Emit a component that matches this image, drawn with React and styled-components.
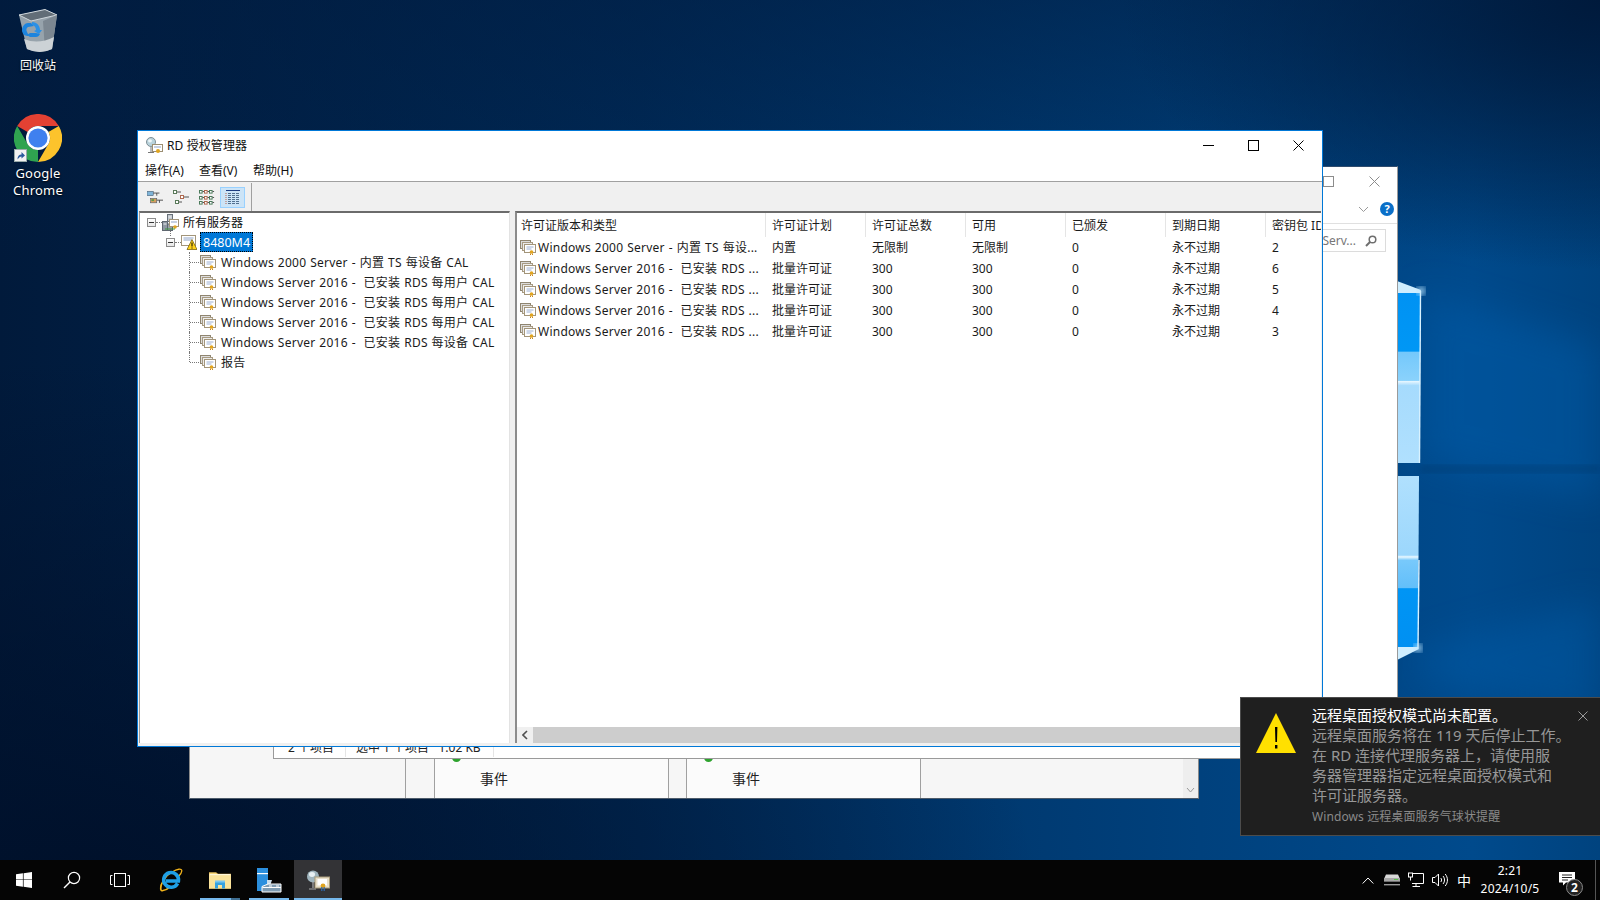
import React from 'react';
import styled, { createGlobalStyle } from 'styled-components';

const licenses = [
  { name: 'Windows 2000 Server - 内置 TS 每设...', plan: '内置', total: '无限制', free: '无限制', id: 2 },
  { name: 'Windows Server 2016 -  已安装 RDS ...', plan: '批量许可证', total: '300', free: '300', id: 6 },
  { name: 'Windows Server 2016 -  已安装 RDS ...', plan: '批量许可证', total: '300', free: '300', id: 5 },
  { name: 'Windows Server 2016 -  已安装 RDS ...', plan: '批量许可证', total: '300', free: '300', id: 4 },
  { name: 'Windows Server 2016 -  已安装 RDS ...', plan: '批量许可证', total: '300', free: '300', id: 3 },
];

const treeLeaves = [
  'Windows 2000 Server - 内置 TS 每设备 CAL',
  'Windows Server 2016 -  已安装 RDS 每用户 CAL',
  'Windows Server 2016 -  已安装 RDS 每用户 CAL',
  'Windows Server 2016 -  已安装 RDS 每用户 CAL',
  'Windows Server 2016 -  已安装 RDS 每设备 CAL',
  '报告',
];

const columns = ['许可证版本和类型', '许可证计划', '许可证总数', '可用', '已颁发', '到期日期', '密钥包 ID'];

function CertStack() {
  return (
    <svg width="16" height="16" viewBox="0 0 16 16">
      <rect x="0.5" y="1.5" width="10" height="8" fill="#dcdcdc" stroke="#8f8570" />
      <rect x="2.5" y="3.5" width="10" height="8" fill="#ececec" stroke="#a89b82" />
      <rect x="4.5" y="5.5" width="11" height="8" fill="#fff" stroke="#a3957a" />
      <path d="M6.5 8h7M6.5 10h5" stroke="#9db0d2" />
      <circle cx="11.5" cy="13" r="1.8" fill="#e0a41f" />
      <path d="M10.5 14.5v1.5M12.5 14.5v1.5" stroke="#c9871a" />
    </svg>
  );
}

function ServersIcon() {
  return (
    <svg width="17" height="17" viewBox="0 0 17 17">
      <rect x="0.5" y="7.5" width="5" height="9" fill="#8f98a3" stroke="#5f6770" />
      <rect x="5.5" y="0.5" width="5" height="7" fill="#c0c6cc" stroke="#69717a" />
      <rect x="5.5" y="10" width="5" height="6.5" fill="#9aa3ac" stroke="#5f6770" />
      <path d="M1.5 10h3M6.5 3h3" stroke="#eee" />
      <rect x="7.5" y="5.5" width="9" height="7" fill="#fff" stroke="#a3957a" />
      <path d="M9 8h6" stroke="#8fa3c7" />
      <circle cx="13" cy="13" r="1.8" fill="#e0a41f" />
      <path d="M3 15h10" stroke="#3e9a3e" />
    </svg>
  );
}

function LicenseServerIcon() {
  return (
    <svg width="16" height="16" viewBox="0 0 16 16">
      <rect x="0.5" y="1.5" width="14" height="10" fill="#fff" stroke="#a3957a" />
      <path d="M2.5 4h10M2.5 6h8" stroke="#8fa3c7" />
      <path d="M11 5.5 L16 15.5 H6 Z" fill="#ffd21a" stroke="#6b5500" strokeWidth="0.7" />
      <path d="M11 8.5v4M11 13.5v1" stroke="#000" />
    </svg>
  );
}

function ToolGlyph({ kind }) {
  if (kind === 0) {
    return (
      <svg width="16" height="15" viewBox="0 0 18 16">
        <rect x="0" y="1" width="7" height="5" fill="#7fb4d8" stroke="#456" strokeWidth="0.6" />
        <path d="M7 3h7M11 3v3" stroke="#444" />
        <rect x="4" y="9" width="7" height="5" fill="#d8a060" stroke="#456" strokeWidth="0.6" />
        <rect x="5" y="10" width="3" height="2" fill="#5a9a4a" />
        <path d="M11 11h7M14 11v3" stroke="#444" />
      </svg>
    );
  }
  if (kind === 1) {
    return (
      <svg width="18" height="16" viewBox="0 0 18 16">
        <rect x="1.5" y="1.5" width="3" height="3" fill="#fff" stroke="#5a7a5a" />
        <path d="M5 3h4" stroke="#555" />
        <rect x="8.5" y="6.5" width="3" height="3" fill="#fff" stroke="#b06a50" />
        <path d="M12 8h5" stroke="#555" />
        <rect x="3.5" y="11.5" width="3" height="3" fill="#fff" stroke="#5a7a5a" />
        <path d="M7 13h3" stroke="#555" />
      </svg>
    );
  }
  if (kind === 2) {
    return (
      <svg width="16" height="16" viewBox="0 0 16 16">
        {[1.5, 7.5, 12.5].map(y =>
          [0.5, 5.5, 10.5].map((x, i) => (
            <g key={`${x}-${y}`}>
              <rect x={x} y={y} width="2.6" height="2.6" fill="#fff" stroke={i === 1 ? '#b06a50' : '#4a7a5a'} />
              <path d={`M${x + 3} ${y + 1}h1.6`} stroke="#555" />
            </g>
          )),
        )}
      </svg>
    );
  }
  return (
    <svg width="16" height="16" viewBox="0 0 16 16">
      <path d="M1 1.5h14" stroke="#1c3c80" />
      {[4.5, 6.5, 8.5, 10.5, 12.5, 14.5].map(y => (
        <path key={y} d={`M3 ${y}h12`} stroke="#52708f" strokeDasharray="3 1" />
      ))}
      <path d="M1 4v11" stroke="#b9634a" strokeDasharray="1 1" />
    </svg>
  );
}

function RecycleBin() {
  return (
    <svg width="40" height="44" viewBox="0 0 40 44">
      <path d="M1 6 L27 0.5 L39 6 L34 40 Q22 46 9 40 Z" fill="#97a3ac" />
      <path d="M1 6 L27 0.5 L39 6 L13 12 Z" fill="#626d77" stroke="#cfd6db" strokeWidth="1" />
      <path d="M25 12 L39 6 L34 40 L27 42 Z" fill="#7c8791" />
      <path d="M6 30 Q20 36 36 28 L34 40 Q22 46 9 40 Z" fill="#ccd2d6" />
      <path d="M4 22 C4 17 7 14 10 14 L13 14 L16 17 L10 18 C8 19 8 21 9 23 L11 27 C7 27 5 26 4 22 Z" fill="#1c84de" />
      <path d="M14 13 C19 13 22 17 22 21 L24 21 L21 25 L16 22 L18 21 C18 18 16 16 14 16 Z" fill="#2b90e6" />
      <path d="M12 28 L18 28 C20 28 21 27 22 25 L18 24 L12 24 L9 26 Z" fill="#1c84de" />
    </svg>
  );
}

function ChromeIcon() {
  return (
    <svg width="48" height="48" viewBox="0 0 48 48">
      <path d="M3.2 12 A24 24 0 0 1 44.8 12 L24 12 A12 12 0 0 0 13.6 18 Z" fill="#e34133" />
      <path d="M44.8 12 A24 24 0 0 1 24 48 L34.4 30 A12 12 0 0 0 34.4 18 Z" fill="#fcc32c" />
      <path d="M24 48 A24 24 0 0 1 3.2 12 L13.6 30 A12 12 0 0 0 24 36 Z" fill="#2fa350" />
      <circle cx="24" cy="24" r="12" fill="#fff" />
      <circle cx="24" cy="24" r="9.6" fill="#3f80ef" />
    </svg>
  );
}

function ShortcutArrow() {
  return (
    <svg width="13" height="13" viewBox="0 0 13 13">
      <rect x="0.5" y="0.5" width="12" height="12" fill="#f2f2f2" stroke="#9aa" />
      <path d="M3.5 10.5 C3.5 7 5 5.5 7.5 5.5 V3 L11 6.5 L7.5 9.5 V7.5 C6 7.5 5 8.5 3.5 10.5 Z" fill="#2a5a9c" />
    </svg>
  );
}

function RdTitleIcon({ size = 17 }) {
  return (
    <svg width={size} height={size} viewBox="0 0 17 17">
      <circle cx="5" cy="5" r="4.5" fill="#b9d3dc" stroke="#7f8f96" />
      <ellipse cx="4" cy="3.8" rx="2" ry="1.6" fill="#eef6f8" />
      <path d="M5 10v5M2 15.5h6" stroke="#777" />
      <rect x="6.5" y="7.5" width="10" height="7" fill="#fff" stroke="#9c8e72" />
      <path d="M8 10h7" stroke="#8fa3c7" />
      <circle cx="12" cy="14" r="2" fill="#e0a41f" />
    </svg>
  );
}

function StartGlyph() {
  return (
    <svg width="16" height="16" viewBox="0 0 16 16">
      <path d="M0 2.3 L6.9 1.3 V7.4 H0 Z M7.6 1.2 L16 0 V7.4 H7.6 Z M0 8.1 H6.9 V14.7 L0 13.7 Z M7.6 8.1 H16 V16 L7.6 14.8 Z" fill="#fff" />
    </svg>
  );
}

function SearchGlyph() {
  return (
    <svg width="18" height="18" viewBox="0 0 18 18" fill="none" stroke="#fff" strokeWidth="1.2">
      <circle cx="11" cy="7" r="5.6" />
      <path d="M7 11 L1 17" strokeWidth="1.5" />
    </svg>
  );
}

function TaskViewGlyph() {
  return (
    <svg width="20" height="14" viewBox="0 0 20 14" fill="none" stroke="#fff" strokeWidth="1">
      <rect x="4.5" y="0.5" width="11" height="13" />
      <path d="M2.5 2.5H0.5V11.5H2.5M17.5 2.5H19.5V11.5H17.5" />
    </svg>
  );
}

function IeGlyph() {
  return (
    <svg width="24" height="24" viewBox="0 0 24 24" fill="none">
      <path d="M2 21.5 C0 18 6 8 13 4 C18 1 23 0 22.8 3 C22.6 5 21 7 19.5 8.5" stroke="#f2b41b" strokeWidth="1.3" />
      <path d="M3 15 C1 20 1 23 4 22.6 C6 22.4 8.5 21 10 19.6" stroke="#f2b41b" strokeWidth="1.5" />
      <path d="M18.6 15.4 A7.4 7.4 0 1 1 19.4 13 H7" stroke="#1fa0e6" strokeWidth="3.6" />
    </svg>
  );
}

function FolderGlyph() {
  return (
    <svg width="22" height="18" viewBox="0 0 22 18">
      <path d="M0 1.5 H7 L9 3 H22 V17.5 H0 Z" fill="#f8d77a" stroke="#e0b550" strokeWidth="0.5" />
      <rect x="0" y="4" width="22" height="13.5" fill="#fbe39a" />
      <rect x="0.5" y="3" width="21" height="1.2" fill="#fff6d8" />
      <path d="M6 11 H16 V17.5 H13 V14 H9 V17.5 H6 Z" fill="#37a2e0" />
      <rect x="6" y="9.5" width="10" height="2" fill="#7cc6ee" />
    </svg>
  );
}

function ServerManagerGlyph() {
  return (
    <svg width="26" height="26" viewBox="0 0 26 26">
      <rect x="1" y="1" width="11" height="23" fill="#2b8fde" />
      <rect x="1" y="6" width="11" height="1.2" fill="#fff" />
      <path d="M11 13 H16 L14 19 H11 Z" fill="#c9ddec" />
      <path d="M12 17 H25 V25 H6 V19.5 Z" fill="#7f9db4" stroke="#fff" strokeWidth="1" />
      <path d="M6.5 20.5 H25 M13 19 h3 M20 19 h3" stroke="#fff" strokeWidth="1" />
    </svg>
  );
}

function RdTaskGlyph() {
  return (
    <svg width="24" height="22" viewBox="0 0 24 22">
      <circle cx="7" cy="7.5" r="6" fill="#9fb4bd" />
      <ellipse cx="6" cy="5.5" rx="3" ry="2.4" fill="#e8f0f3" />
      <path d="M7 13v6M3 20h7" stroke="#aaa" strokeWidth="1.2" />
      <rect x="9" y="8" width="14.5" height="11" fill="#e8dfc9" stroke="#a89a78" />
      <rect x="11.5" y="10" width="9.5" height="6.5" fill="#fff" />
      <circle cx="17" cy="17" r="2.4" fill="#e0a41f" />
      <path d="M15.8 18v4M18.2 18v4" stroke="#2d6ab4" strokeWidth="1.2" />
    </svg>
  );
}

function Wallpaper() {
  return (
    <WallpaperSvg viewBox="0 0 1600 900" preserveAspectRatio="none">
      <defs>
        <linearGradient id="sky" x1="0" y1="0" x2="1" y2="0">
          <stop offset="0" stopColor="#011a3b" />
          <stop offset="0.4" stopColor="#002b59" />
          <stop offset="0.75" stopColor="#00417d" />
          <stop offset="0.92" stopColor="#004a8c" />
          <stop offset="1" stopColor="#00437f" />
        </linearGradient>
        <linearGradient id="topShade" x1="0" y1="0" x2="0" y2="1">
          <stop offset="0" stopColor="#011c40" stopOpacity="0.55" />
          <stop offset="0.3" stopColor="#011c40" stopOpacity="0" />
        </linearGradient>
        <radialGradient id="lowerLeft" cx="0.05" cy="1" r="0.6">
          <stop offset="0" stopColor="#00102a" />
          <stop offset="1" stopColor="#00102a" stopOpacity="0" />
        </radialGradient>
        <radialGradient id="cornerDark" cx="1" cy="0" r="0.3">
          <stop offset="0" stopColor="#001a3c" />
          <stop offset="1" stopColor="#001a3c" stopOpacity="0" />
        </radialGradient>
        <linearGradient id="paneTop" x1="0" y1="291" x2="0" y2="463" gradientUnits="userSpaceOnUse">
          <stop offset="0" stopColor="#0092f3" />
          <stop offset="0.35" stopColor="#0097f5" />
          <stop offset="0.355" stopColor="#74c8fb" />
          <stop offset="0.52" stopColor="#8ad2fc" />
          <stop offset="0.525" stopColor="#e6f6ff" />
          <stop offset="0.55" stopColor="#a6dbfd" />
          <stop offset="1" stopColor="#b0e0fe" />
        </linearGradient>
        <linearGradient id="paneBottom" x1="0" y1="476" x2="0" y2="648" gradientUnits="userSpaceOnUse">
          <stop offset="0" stopColor="#b0e0fe" />
          <stop offset="0.46" stopColor="#9cd7fc" />
          <stop offset="0.47" stopColor="#eaf8ff" />
          <stop offset="0.49" stopColor="#78c9fb" />
          <stop offset="0.65" stopColor="#62bffa" />
          <stop offset="0.655" stopColor="#0095f5" />
          <stop offset="1" stopColor="#0090f2" />
        </linearGradient>
        <filter id="soft"><feGaussianBlur stdDeviation="18" /></filter>
        <filter id="flare"><feGaussianBlur stdDeviation="3" /></filter>
      </defs>
      <rect width="1600" height="900" fill="url(#sky)" />
      <rect width="1600" height="900" fill="url(#topShade)" />
      <rect width="1600" height="900" fill="url(#lowerLeft)" />
      <rect width="1600" height="900" fill="url(#cornerDark)" />
      <g filter="url(#soft)" opacity="0.4">
        <path d="M1420 291 L1600 345 V500 L1420 460 Z" fill="#0060b0" />
        <path d="M1420 648 L1600 600 V720 L1420 680 Z" fill="#005ead" />
      </g>
      <rect x="1420" y="465" width="180" height="8" fill="#00305f" opacity="0.3" filter="url(#flare)" />
      <path d="M1300 293 H1420 V463 H1300 Z" fill="url(#paneTop)" />
      <path d="M1300 476 H1419 L1418 648 H1300 Z" fill="url(#paneBottom)" />
      <path d="M1397 281 L1421 290 L1420 293 H1397 Z" fill="#cfeeff" />
      <path d="M1397 647 H1418 L1419 649 L1397 660 Z" fill="#cfeeff" />
      <path d="M1420.5 291 L1419.5 463" fill="none" stroke="#d9f2ff" strokeWidth="1.4" />
      <path d="M1418 648 L1419 560" fill="none" stroke="#d9f2ff" strokeWidth="1.4" />
      <circle cx="1421" cy="291" r="4" fill="#bfe8ff" filter="url(#flare)" />
      <circle cx="1418" cy="648" r="4" fill="#bfe8ff" filter="url(#flare)" />
    </WallpaperSvg>
  );
}

function App() {
  return (
    <Desktop>
      <GlobalStyle />
      <Wallpaper />

      <DesktopIcon $top={9}>
        <RecycleBin />
        <IconLabel $cjk>回收站</IconLabel>
      </DesktopIcon>
      <DesktopIcon $top={114}>
        <ChromeIcon />
        <ShortcutBadge><ShortcutArrow /></ShortcutBadge>
        <IconLabel>Google<br />Chrome</IconLabel>
      </DesktopIcon>

      <BackPanel>
        <BackSpacer />
        <EventGutter />
        <EventCard>
          <GreenDot />
          <EventLabel>事件</EventLabel>
        </EventCard>
        <EventGutter $narrow />
        <EventCard>
          <GreenDot />
          <EventLabel>事件</EventLabel>
        </EventCard>
        <PanelFill />
        <PanelScroll>
          <svg width="9" height="6" viewBox="0 0 9 6" fill="none" stroke="#999"><path d="M1 1l3.5 4L8 1" /></svg>
        </PanelScroll>
      </BackPanel>

      <BackWindow>
        <BackTitle>
          <BackCaption>
            <svg width="11" height="11" viewBox="0 0 11 11" fill="none" stroke="#8c8c8c"><rect x="0.5" y="0.5" width="10" height="10" /></svg>
          </BackCaption>
          <BackCaption>
            <svg width="11" height="11" viewBox="0 0 11 11" fill="none" stroke="#8c8c8c"><path d="M0.5 0.5l10 10M10.5 0.5l-10 10" /></svg>
          </BackCaption>
        </BackTitle>
        <BackRibbon>
          <svg width="11" height="7" viewBox="0 0 11 7" fill="none" stroke="#999"><path d="M1 1l4.5 4.5L10 1" /></svg>
          <HelpDot>?</HelpDot>
        </BackRibbon>
        <SearchRow>
          <SearchBox>
            <span>Serv...</span>
            <svg width="12" height="12" viewBox="0 0 12 12" fill="none" stroke="#6e6e6e" strokeWidth="1.5">
              <circle cx="7.5" cy="4.5" r="3.3" />
              <path d="M5 7l-4 4" strokeWidth="2" />
            </svg>
          </SearchBox>
        </SearchRow>
        <StatusBar>
          <StatusCell $width={58}>2 个项目</StatusCell>
          <StatusCell $width={138}>选中 1 个项目   1.02 KB</StatusCell>
        </StatusBar>
      </BackWindow>

      <MainWindow>
        <TitleBar>
          <TitleLeft>
            <RdTitleIcon />
            <TitleText>RD 授权管理器</TitleText>
          </TitleLeft>
          <CaptionGroup>
            <CaptionButton>
              <svg width="11" height="11" viewBox="0 0 11 11" stroke="#000"><path d="M0 5.5h11" /></svg>
            </CaptionButton>
            <CaptionButton>
              <svg width="11" height="11" viewBox="0 0 11 11" fill="none" stroke="#000"><rect x="0.5" y="0.5" width="10" height="10" /></svg>
            </CaptionButton>
            <CaptionButton>
              <svg width="11" height="11" viewBox="0 0 11 11" stroke="#000"><path d="M0.5 0.5l10 10M10.5 0.5l-10 10" /></svg>
            </CaptionButton>
          </CaptionGroup>
        </TitleBar>

        <MenuBar>
          <MenuItem>操作(A)</MenuItem>
          <MenuItem>查看(V)</MenuItem>
          <MenuItem>帮助(H)</MenuItem>
        </MenuBar>

        <Toolbar>
          {[0, 1, 2, 3].map(kind => (
            <ToolButton key={kind} $active={kind === 3}>
              <ToolGlyph kind={kind} />
            </ToolButton>
          ))}
          <ToolDivider />
        </Toolbar>

        <Panes>
          <TreePane>
            <TreeRow $indent={7}>
              <Expander />
              <ServersIcon />
              <RootLabel>所有服务器</RootLabel>
            </TreeRow>
            <TreeRow $indent={26} $stem>
              <Expander />
              <LicenseServerIcon />
              <SelectedLabel>8480M4</SelectedLabel>
            </TreeRow>
            {treeLeaves.map((leaf, i) => (
              <LeafRow key={i} $last={i === treeLeaves.length - 1}>
                <CertStack />
                <LeafLabel>{leaf}</LeafLabel>
              </LeafRow>
            ))}
          </TreePane>

          <ListPane>
            <ListScroll>
              <HeaderRow>
                {columns.map(col => <HeaderCell key={col}>{col}</HeaderCell>)}
              </HeaderRow>
              {licenses.map(row => (
                <ListRow key={row.id}>
                  <NameCell><CertStack /><span>{row.name}</span></NameCell>
                  <Cell>{row.plan}</Cell>
                  <Cell>{row.total}</Cell>
                  <Cell>{row.free}</Cell>
                  <Cell>0</Cell>
                  <Cell>永不过期</Cell>
                  <Cell>{row.id}</Cell>
                </ListRow>
              ))}
            </ListScroll>
            <HScroll>
              <ScrollArrow>
                <svg width="6" height="10" viewBox="0 0 6 10" fill="none" stroke="#505050" strokeWidth="1.6"><path d="M5 1L1 5l4 4" /></svg>
              </ScrollArrow>
              <ScrollThumb />
            </HScroll>
          </ListPane>
        </Panes>
      </MainWindow>

      <Toast>
        <ToastIcon>
          <svg width="40" height="40" viewBox="0 0 40 40">
            <path d="M20 0 L40 40 H0 Z" fill="#ffe000" />
            <path d="M19 14h2.4l-.4 15h-1.6zM19 32h2.4v3.4H19z" fill="#000" />
          </svg>
        </ToastIcon>
        <ToastBody>
          <ToastTitle>远程桌面授权模式尚未配置。</ToastTitle>
          <ToastText>
            远程桌面服务将在 119 天后停止工作。<br />
            在 RD 连接代理服务器上，请使用服<br />
            务器管理器指定远程桌面授权模式和<br />
            许可证服务器。
          </ToastText>
          <ToastSource>Windows 远程桌面服务气球状提醒</ToastSource>
        </ToastBody>
        <ToastClose>
          <svg width="10" height="10" viewBox="0 0 10 10" stroke="#9a9a9a"><path d="M0.5 0.5l9 9M9.5 0.5l-9 9" /></svg>
        </ToastClose>
      </Toast>

      <Taskbar>
        <TaskSlot><StartGlyph /></TaskSlot>
        <TaskSlot><SearchGlyph /></TaskSlot>
        <TaskSlot><TaskViewGlyph /></TaskSlot>
        <PinnedGroup>
          <PinnedSlot $first><IeGlyph /></PinnedSlot>
          <PinnedSlot $running $stacked><FolderGlyph /></PinnedSlot>
          <PinnedSlot $running><ServerManagerGlyph /></PinnedSlot>
          <PinnedSlot $running $active><RdTaskGlyph /></PinnedSlot>
        </PinnedGroup>
        <Tray>
          <TrayItem>
            <svg width="12" height="7" viewBox="0 0 12 7" fill="none" stroke="#fff"><path d="M0.7 6.5L6 1l5.3 5.5" /></svg>
          </TrayItem>
          <TrayItem>
            <svg width="16" height="12" viewBox="0 0 16 12">
              <path d="M2 0.5H14L16 5V7.5H0V5Z" fill="#d8d8d8" />
              <rect x="0" y="4" width="16" height="3" fill="#a8a8a8" />
              <rect x="10" y="5" width="4" height="1" fill="#58c04a" />
              <rect x="0" y="10" width="16" height="1.4" fill="#9a9a9a" />
            </svg>
          </TrayItem>
          <TrayItem>
            <svg width="16" height="16" viewBox="0 0 16 16" fill="none" stroke="#fff">
              <path d="M5 1.5H15.5V11.5H4M8 11.5V14.5M4.5 14.5H12" />
              <rect x="0.5" y="1" width="4" height="4" />
              <path d="M2.5 5V8.5" />
            </svg>
          </TrayItem>
          <TrayItem>
            <svg width="16" height="14" viewBox="0 0 16 14" fill="none" stroke="#fff">
              <path d="M0.5 4.5H3L6.5 1V13L3 9.5H0.5Z" />
              <path d="M8.8 5c1 1.2 1 2.8 0 4M11 3c2 2.4 2 5.6 0 8M13.2 1c3 3.6 3 8.4 0 12" />
            </svg>
          </TrayItem>
          <TrayText>中</TrayText>
          <Clock>
            <span>2:21</span>
            <span>2024/10/5</span>
          </Clock>
          <Notify>
            <svg width="16" height="14" viewBox="0 0 16 14">
              <path d="M0 0H16V10.5H7L4 13.5V10.5H0Z" fill="#fff" />
              <path d="M3 3H13M3 5.5H13M3 8H9" stroke="#222" />
            </svg>
            <NotifyBadge>2</NotifyBadge>
          </Notify>
          <ShowDesktop />
        </Tray>
      </Taskbar>
    </Desktop>
  );
}

export default App;

const GlobalStyle = createGlobalStyle`
  html, body {
    margin: 0;
    padding: 0;
    background: #001f45;
  }
  body {
    font-family: "Noto Sans", "Noto Sans CJK SC", sans-serif;
    font-size: 12px;
    color: #111;
  }
  * {
    box-sizing: border-box;
  }
`;

const Desktop = styled.div`
  position: relative;
  width: 1600px;
  height: 900px;
  overflow: hidden;
`;

const WallpaperSvg = styled.svg`
  position: absolute;
  inset: 0;
  width: 1600px;
  height: 900px;
`;

const DesktopIcon = styled.div`
  position: absolute;
  left: 6px;
  top: ${p => p.$top}px;
  width: 64px;
  display: flex;
  flex-direction: column;
  align-items: center;
`;

const IconLabel = styled.div`
  margin-top: ${p => (p.$cjk ? 4 : 3)}px;
  color: #fff;
  font-size: ${p => (p.$cjk ? 12 : 13)}px;
  letter-spacing: ${p => (p.$cjk ? 0 : 0.2)}px;
  line-height: 17px;
  text-align: center;
  text-shadow: 0 1px 2px #000;
`;

const ShortcutBadge = styled.div`
  position: absolute;
  left: 8px;
  top: 35px;
  height: 13px;
`;

const BackPanel = styled.div`
  position: absolute;
  left: 189px;
  top: 700px;
  width: 1010px;
  height: 99px;
  display: flex;
  background: #f6f6f6;
  border-bottom: 1px solid #4d5b6a;
  border-left: 1px solid #8a8a8a;
  border-right: 1px solid #8a8a8a;
`;

const BackSpacer = styled.div`
  width: 216px;
  border-right: 1px solid #a0a0a0;
`;

const EventGutter = styled.div`
  width: ${p => (p.$narrow ? 17 : 28)}px;
`;

const EventCard = styled.div`
  position: relative;
  width: 235px;
  display: flex;
  align-items: flex-end;
  background: #fbfbfb;
  border-left: 1px solid #a0a0a0;
  border-right: 1px solid #a0a0a0;
`;

const GreenDot = styled.div`
  position: absolute;
  left: 17px;
  top: 53px;
  width: 9px;
  height: 9px;
  border-radius: 50%;
  background: #2ea32e;
`;

const EventLabel = styled.div`
  margin: 0 0 9px 45px;
  font-size: 14px;
  line-height: 20px;
  color: #222;
`;

const PanelFill = styled.div`
  flex: 1;
`;

const PanelScroll = styled.div`
  width: 15px;
  display: flex;
  align-items: flex-end;
  justify-content: center;
  padding-bottom: 5px;
  background: #eeeeee;
`;

const BackWindow = styled.div`
  position: absolute;
  left: 273px;
  top: 166px;
  width: 1125px;
  height: 593px;
  display: flex;
  flex-direction: column;
  background: #fff;
  border: 1px solid #9a9a9a;
  border-top-color: #2f4c6e;
`;

const BackTitle = styled.div`
  display: flex;
  justify-content: flex-end;
  height: 28px;
`;

const BackCaption = styled.div`
  width: 46px;
  display: flex;
  align-items: center;
  justify-content: center;
`;

const BackRibbon = styled.div`
  display: flex;
  align-items: center;
  justify-content: flex-end;
  gap: 11px;
  height: 29px;
  padding-right: 3px;
  border-bottom: 1px solid #e0e0e0;
`;

const HelpDot = styled.div`
  width: 14px;
  height: 14px;
  border-radius: 50%;
  background: #0a6fc8;
  color: #fff;
  font-size: 11px;
  font-weight: 700;
  line-height: 14px;
  text-align: center;
`;

const SearchRow = styled.div`
  display: flex;
  justify-content: flex-end;
  padding: 5px 11px 0 0;
`;

const SearchBox = styled.div`
  width: 120px;
  height: 23px;
  display: flex;
  align-items: center;
  justify-content: flex-end;
  gap: 9px;
  padding-right: 8px;
  border: 1px solid #dcdcdc;
  color: #777;
  font-size: 12px;
`;

const StatusBar = styled.div`
  margin-top: auto;
  height: 18px;
  display: flex;
  align-items: flex-start;
  padding-left: 14px;
  white-space: pre;
  font-size: 12px;
  line-height: 15px;
`;

const StatusCell = styled.div`
  width: ${p => p.$width}px;
  height: 17px;
  margin-right: 10px;
  color: #222;
  border-right: 1px solid #e5e5e5;
`;

const MainWindow = styled.div`
  position: absolute;
  left: 137px;
  top: 130px;
  width: 1186px;
  height: 617px;
  display: flex;
  flex-direction: column;
  background: #fff;
  border: 1px solid #0078d7;
`;

const TitleBar = styled.div`
  height: 30px;
  padding-bottom: 2px;
  display: flex;
  align-items: center;
  justify-content: space-between;
  flex-shrink: 0;
`;

const TitleLeft = styled.div`
  display: flex;
  align-items: center;
  padding-left: 8px;
`;

const TitleText = styled.div`
  margin-left: 4px;
  font-size: 12px;
  letter-spacing: 0.1px;
`;

const CaptionGroup = styled.div`
  display: flex;
  padding-right: 1px;
`;

const CaptionButton = styled.div`
  width: 45px;
  height: 28px;
  display: flex;
  align-items: center;
  justify-content: center;
`;

const MenuBar = styled.div`
  height: 20px;
  padding: 0 0 2px 7px;
  display: flex;
  align-items: center;
  gap: 14px;
  flex-shrink: 0;
`;

const MenuItem = styled.div`
  font-size: 12px;
  width: 40px;
  white-space: nowrap;
`;

const Toolbar = styled.div`
  height: 30px;
  display: flex;
  align-items: center;
  gap: 1px;
  padding: 1px 0 0 4px;
  background: #f0f0f0;
  border-top: 1px solid #a0a0a0;
  flex-shrink: 0;
`;

const ToolButton = styled.div`
  width: 25px;
  height: 21px;
  display: flex;
  align-items: center;
  justify-content: center;
  background: ${p => (p.$active ? '#cce4f7' : 'transparent')};
  border: 1px solid ${p => (p.$active ? '#99d1ff' : 'transparent')};
`;

const ToolDivider = styled.div`
  width: 1px;
  height: 29px;
  margin-left: 5px;
  background: #a0a0a0;
`;

const Panes = styled.div`
  flex: 1;
  min-height: 0;
  display: flex;
  gap: 5px;
  padding: 0 1px 3px 1px;
  background: #f0f0f0;
`;

const TreePane = styled.div`
  width: 371px;
  background: #fff;
  border-top: 2px solid #6b6b6b;
  border-left: 1px solid #9a9a9a;
  border-right: 1px solid #e3e3e3;
`;

const TreeRow = styled.div`
  position: relative;
  height: 20px;
  padding: 0 0 2px ${p => p.$indent}px;
  display: flex;
  align-items: center;

  ${p => p.$stem && `
    &::before {
      content: '';
      position: absolute;
      left: 30px;
      top: -4px;
      height: 7px;
      border-left: 1px dotted #777;
    }
  `}
`;

const Expander = styled.div`
  position: relative;
  width: 9px;
  height: 9px;
  margin-right: 6px;
  flex-shrink: 0;
  border: 1px solid #8c8c8c;
  background: linear-gradient(#fff, #e6e6e6);

  &::before {
    content: '';
    position: absolute;
    left: 1px;
    top: 3px;
    width: 5px;
    height: 1px;
    background: #333;
  }
  &::after {
    content: '';
    position: absolute;
    left: 8px;
    top: 3px;
    width: 6px;
    border-top: 1px dotted #777;
  }
`;

const RootLabel = styled.span`
  margin-left: 4px;
  font-size: 12px;
`;

const SelectedLabel = styled.span`
  margin-left: 3px;
  height: 20px;
  padding: 0 2px;
  display: flex;
  align-items: center;
  color: #fff;
  font-size: 12.5px;
  background: #0078d7;
  border: 1px dotted #000;
`;

const LeafRow = styled.div`
  position: relative;
  height: 20px;
  padding: 0 0 2px 60px;
  display: flex;
  align-items: center;

  &::before {
    content: '';
    position: absolute;
    left: 49px;
    top: -1px;
    height: ${p => (p.$last ? '10px' : '20px')};
    border-left: 1px dotted #777;
  }
  &::after {
    content: '';
    position: absolute;
    left: 50px;
    top: 9px;
    width: 9px;
    border-top: 1px dotted #777;
  }
`;

const LeafLabel = styled.span`
  margin-left: 5px;
  font-size: 12px;
  letter-spacing: 0.25px;
  word-spacing: 0.5px;
  white-space: pre;
  color: #1a1a1a;
`;

const ListPane = styled.div`
  flex: 1;
  min-width: 0;
  display: flex;
  flex-direction: column;
  background: #fff;
  border-top: 2px solid #6b6b6b;
  border-left: 2px solid #8c8c8c;
  overflow: hidden;
`;

const ListScroll = styled.div`
  flex: 1;
  min-height: 0;
  overflow: hidden;
`;

const HeaderRow = styled.div`
  display: grid;
  grid-template-columns: 249px repeat(5, 100px) 56px;
  height: 24px;
`;

const HeaderCell = styled.div`
  display: flex;
  align-items: center;
  padding-left: 6px;
  white-space: nowrap;
  font-size: 12px;
  border-right: 1px solid #e5e5e5;
  color: #1a1a1a;
  &:first-child {
    padding-left: 4px;
  }
  &:last-child {
    border-right: none;
    overflow: hidden;
  }
`;

const ListRow = styled.div`
  display: grid;
  grid-template-columns: 249px repeat(5, 100px) 56px;
  height: 21px;
  padding-bottom: 1px;
  align-items: center;
`;

const Cell = styled.div`
  padding-left: 6px;
  white-space: nowrap;
  font-size: 12px;
  color: #1a1a1a;
`;

const NameCell = styled.div`
  display: flex;
  align-items: center;
  gap: 2px;
  padding-left: 3px;
  white-space: pre;
  font-size: 12px;
  letter-spacing: 0.25px;
  word-spacing: 0.5px;
  color: #1a1a1a;
  overflow: hidden;
`;

const HScroll = styled.div`
  height: 16px;
  display: flex;
  flex-shrink: 0;
  background: #f0f0f0;
`;

const ScrollArrow = styled.div`
  width: 16px;
  display: flex;
  align-items: center;
  justify-content: center;
`;

const ScrollThumb = styled.div`
  flex: 1;
  margin-right: 60px;
  background: #cdcdcd;
`;

const Toast = styled.div`
  position: absolute;
  left: 1240px;
  top: 697px;
  width: 362px;
  height: 139px;
  display: flex;
  padding: 7px 0 0 15px;
  background: #1f1f1f;
  border: 1px solid #4c4c4c;
`;

const ToastIcon = styled.div`
  width: 40px;
  height: 40px;
  margin-top: 8px;
  flex-shrink: 0;
`;

const ToastBody = styled.div`
  margin-left: 16px;
  flex: 1;
`;

const ToastTitle = styled.div`
  color: #fff;
  font-size: 15px;
  line-height: 20px;
`;

const ToastText = styled.div`
  color: #979797;
  font-size: 15px;
  line-height: 20px;
`;

const ToastSource = styled.div`
  margin-top: 3px;
  color: #8a8a8a;
  font-size: 12px;
  letter-spacing: 0.1px;
  line-height: 18px;
`;

const ToastClose = styled.div`
  position: absolute;
  right: 13px;
  top: 13px;
  height: 10px;
  line-height: 0;
`;

const Taskbar = styled.div`
  position: absolute;
  left: 0;
  right: 0;
  bottom: 0;
  height: 40px;
  display: flex;
  background: #050505;
`;

const TaskSlot = styled.div`
  width: 48px;
  display: flex;
  align-items: center;
  justify-content: center;
`;

const PinnedGroup = styled.div`
  display: flex;
  margin-left: 3px;
`;

const PinnedSlot = styled.div`
  position: relative;
  width: ${p => (p.$active || p.$first ? 48 : 49)}px;
  margin-left: ${p => (p.$active ? 1 : 0)}px;
  display: flex;
  align-items: center;
  justify-content: center;
  background: ${p => (p.$active ? '#333336' : 'transparent')};

  ${p => p.$running && `
    &::after {
      content: '';
      position: absolute;
      left: ${p.$active ? 0 : 5}px;
      right: ${p.$active ? 0 : 4}px;
      bottom: 0;
      height: 2px;
      background: #76b9ed;
    }
  `}
  ${p => p.$stacked && `
    &::before {
      content: '';
      position: absolute;
      left: 36px;
      width: 9px;
      bottom: 0;
      height: 2px;
      background: #3f6f93;
      z-index: 1;
    }
  `}
`;

const Tray = styled.div`
  margin-left: auto;
  display: flex;
  align-items: stretch;
`;

const TrayItem = styled.div`
  width: 24px;
  display: flex;
  align-items: center;
  justify-content: center;
`;

const TrayText = styled(TrayItem)`
  color: #fff;
  font-size: 14px;
`;

const Clock = styled.div`
  width: 68px;
  display: flex;
  flex-direction: column;
  align-items: center;
  justify-content: center;
  gap: 2px;
  color: #fff;
  font-size: 12px;
  letter-spacing: 0.2px;
  line-height: 16px;
`;

const Notify = styled.div`
  position: relative;
  width: 46px;
  padding: 12px 0 0 15px;
`;

const NotifyBadge = styled.div`
  position: absolute;
  left: 22px;
  top: 19px;
  width: 17px;
  height: 17px;
  border-radius: 50%;
  background: #222;
  border: 1px solid #8a8a8a;
  color: #fff;
  font-size: 12px;
  font-weight: 700;
  line-height: 15px;
  text-align: center;
`;

const ShowDesktop = styled.div`
  width: 10px;
  position: relative;
  &::after {
    content: '';
    position: absolute;
    left: 5px;
    top: 0;
    bottom: 0;
    width: 1px;
    background: #555;
  }
`;
